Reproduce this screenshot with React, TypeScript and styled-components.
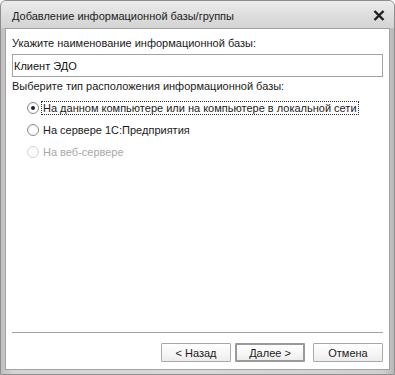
import styled, { createGlobalStyle } from "styled-components";

type Choice = {
  label: string;
  checked?: boolean;
  disabled?: boolean;
  focused?: boolean;
};

const choices: Choice[] = [
  { label: "На данном компьютере или на компьютере в локальной сети", checked: true, focused: true },
  { label: "На сервере 1С:Предприятия" },
  { label: "На веб-сервере", disabled: true },
];

export default function App() {
  return (
    <>
      <GlobalStyle />
      <Window>
        <TitleBar>
          <Title>Добавление информационной базы/группы</Title>
          <CloseButton>
            <svg width="12" height="11" viewBox="0 0 12 11">
              <path d="M1.5 1 L10.5 10 M10.5 1 L1.5 10" stroke="#1e1e1e" strokeWidth="2.4" />
            </svg>
          </CloseButton>
        </TitleBar>

        <Client>
          <Label>Укажите наименование информационной базы:</Label>
          <TextInput defaultValue="Клиент ЭДО" />

          <Label $top={2}>Выберите тип расположения информационной базы:</Label>
          <RadioList>
            {choices.map((c) => (
              <RadioRow key={c.label} $disabled={c.disabled}>
                <RadioCircle $checked={c.checked} $disabled={c.disabled} />
                <RadioText $focused={c.focused}>{c.label}</RadioText>
              </RadioRow>
            ))}
          </RadioList>

          <Spacer />
          <Separator />
          <ButtonRow>
            <Button>&lt; Назад</Button>
            <Button $default>Далее &gt;</Button>
            <Button $gap>Отмена</Button>
          </ButtonRow>
        </Client>
      </Window>
    </>
  );
}

const GlobalStyle = createGlobalStyle`
  html, body {
    margin: 0;
    padding: 0;
    background: #ffffff;
  }
  body {
    font-family: "Liberation Sans", Arial, sans-serif;
  }
`;

const Window = styled.div`
  box-sizing: border-box;
  width: 395px;
  height: 375px;
  display: flex;
  flex-direction: column;
  padding: 0 4px 4px;
  border: 1px solid #8e8e8e;
  border-radius: 6px 6px 0 0;
  background: linear-gradient(90deg, #c0c0c0 0%, #d4d4d4 3%, #d9d9d9 50%, #d0d0d0 97%, #b8b8b8 100%);
`;

const TitleBar = styled.div`
  height: 27px;
  display: flex;
  align-items: center;
  justify-content: space-between;
  margin: 0 -4px;
  padding: 0 9px 0 11px;
  border-radius: 5px 5px 0 0;
  background: linear-gradient(180deg, #ececec 0%, #dcdcdc 60%, #d4d4d4 100%);
`;

const Title = styled.div`
  font-size: 11px;
  color: #1c1c1c;
  padding-top: 2px;
`;

const CloseButton = styled.div`
  display: flex;
  align-items: center;
  padding-top: 2px;
`;

const Client = styled.div`
  flex: 1;
  display: flex;
  flex-direction: column;
  padding: 7px 6px;
  background: #ffffff;
  border: 1px solid #a2a2a2;
`;

const Label = styled.div<{ $top?: number }>`
  font-size: 11px;
  line-height: 14px;
  color: #1a1a1a;
  margin-top: ${({ $top }) => $top ?? 0}px;
`;

const TextInput = styled.input`
  box-sizing: border-box;
  height: 23px;
  margin-top: 4px;
  padding: 0 1px;
  border: 1px solid #a4a4a4;
  font-family: "Liberation Sans", Arial, sans-serif;
  font-size: 11px;
  color: #111111;
  outline: none;
  background: #ffffff;
`;

const RadioList = styled.div`
  display: flex;
  flex-direction: column;
  gap: 8px;
  margin-top: 8px;
  padding-left: 15px;
`;

const RadioRow = styled.div<{ $disabled?: boolean }>`
  display: flex;
  align-items: center;
  height: 14px;
  color: ${({ $disabled }) => ($disabled ? "#a8a8a8" : "#1a1a1a")};
`;

const RadioCircle = styled.span<{ $checked?: boolean; $disabled?: boolean }>`
  box-sizing: border-box;
  position: relative;
  width: 12px;
  height: 12px;
  border-radius: 50%;
  border: 1px solid ${({ $disabled }) => ($disabled ? "#d4d4d4" : "#8c8c8c")};
  background: ${({ $disabled }) =>
    $disabled ? "#fbfbfb" : "radial-gradient(circle at 60% 60%, #ffffff 40%, #e6e6e6 100%)"};
  flex-shrink: 0;

  &::after {
    content: "";
    display: ${({ $checked }) => ($checked ? "block" : "none")};
    position: absolute;
    left: 3px;
    top: 3px;
    width: 4px;
    height: 4px;
    border-radius: 50%;
    background: #222222;
  }
`;

const RadioText = styled.span<{ $focused?: boolean }>`
  font-size: 11px;
  line-height: 12px;
  margin-left: 2px;
  padding: 0 1px;
  border: 1px dotted ${({ $focused }) => ($focused ? "#333333" : "transparent")};
  white-space: nowrap;
`;

const Spacer = styled.div`
  flex: 1;
`;

const Separator = styled.div`
  height: 1px;
  background: #a3a3a3;
  margin-bottom: 10px;
`;

const ButtonRow = styled.div`
  display: flex;
  justify-content: flex-end;
  gap: 4px;
`;

const Button = styled.button<{ $default?: boolean; $gap?: boolean }>`
  box-sizing: border-box;
  width: 70px;
  height: 19px;
  padding: 0;
  margin-left: ${({ $gap }) => ($gap ? "4px" : "0")};
  font-family: "Liberation Sans", Arial, sans-serif;
  font-size: 11px;
  color: #1a1a1a;
  border: ${({ $default }) => ($default ? "2px solid #9a9a9a" : "1px solid #a8a8a8")};
  border-radius: 1px;
  background: linear-gradient(180deg, #ffffff 0%, #f6f6f6 60%, #ececec 100%);
`;
